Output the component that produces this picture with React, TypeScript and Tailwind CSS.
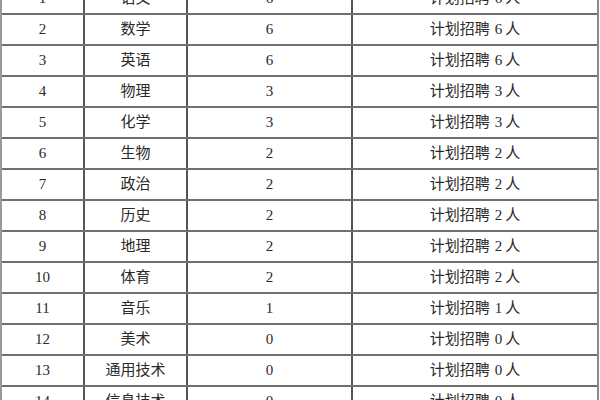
import React from "react";

const rows: [string, string, string][] = [
  ["1", "语文", "6"],
  ["2", "数学", "6"],
  ["3", "英语", "6"],
  ["4", "物理", "3"],
  ["5", "化学", "3"],
  ["6", "生物", "2"],
  ["7", "政治", "2"],
  ["8", "历史", "2"],
  ["9", "地理", "2"],
  ["10", "体育", "2"],
  ["11", "音乐", "1"],
  ["12", "美术", "0"],
  ["13", "通用技术", "0"],
  ["14", "信息技术", "0"],
];

export default function App() {
  return (
    <div
      className="w-[600px] h-[400px] overflow-hidden bg-white text-[#2a2a2a] text-[15px]"
      style={{ fontFamily: '"Liberation Serif", "Noto Sans CJK SC", serif' }}
    >
      <div className="w-[599px] -mt-[16px] border-l-2 border-r-2 border-l-[#9a9a9a] border-r-[#8a8a8a]">
        {rows.map(([n, s, c]) => (
          <div
            key={n}
            className="grid grid-cols-[83px_103px_165px_1fr] h-[31px] border-b-2 border-[#6f6f6f]"
          >
            <div className="flex items-center justify-center border-r-2 border-[#555]">{n}</div>
            <div className="flex items-center justify-center border-r-2 border-[#555]">{s}</div>
            <div className="flex items-center justify-center border-r-2 border-[#555]">{c}</div>
            <div className="flex items-center justify-center">
              <span>计划招聘</span>
              <span className="ml-[5px] mr-[3px]">{c}</span>
              <span>人</span>
            </div>
          </div>
        ))}
      </div>
    </div>
  );
}
